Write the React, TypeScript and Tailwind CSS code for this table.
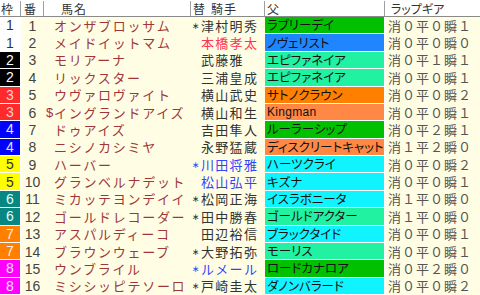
import React from "react";

type Row = {
  w: number;
  n: number;
  pre?: string;
  name: string;
  jp?: string;
  j: string;
  jc: string;
  sire: string;
  sc: string;
  gear: string;
};

const GREEN = "#00c000";
const BLUE = "#1f86ff";
const MINT = "#20f2a2";
const ORANGE = "#ff8000";
const CORAL = "#ff8844";
const CYAN = "#10f4ff";

const rows: Row[] = [
  { w: 1, n: 1, name: "オンザブロッサム", jp: "*", j: "津村明秀", jc: "#333333", sire: "ラブリーデイ", sc: GREEN, gear: "消０平０瞬１" },
  { w: 1, n: 2, name: "メイドイットマム", j: "本橋孝太", jc: "#ff3355", sire: "ノヴェリスト", sc: BLUE, gear: "消０平０瞬０" },
  { w: 2, n: 3, name: "モリアーナ", j: "武藤雅", jc: "#333333", sire: "エピファネイア", sc: MINT, gear: "消０平１瞬１" },
  { w: 2, n: 4, name: "リックスター", j: "三浦皇成", jc: "#333333", sire: "エピファネイア", sc: MINT, gear: "消０平０瞬１" },
  { w: 3, n: 5, name: "ウヴァロヴァイト", j: "横山武史", jc: "#333333", sire: "サトノクラウン", sc: ORANGE, gear: "消０平０瞬２" },
  { w: 3, n: 6, pre: "$", name: "イングランドアイズ", j: "横山和生", jc: "#333333", sire: "Kingman", sc: CORAL, gear: "消０平０瞬１" },
  { w: 4, n: 7, name: "ドゥアイズ", j: "吉田隼人", jc: "#333333", sire: "ルーラーシップ", sc: GREEN, gear: "消０平２瞬１" },
  { w: 4, n: 8, name: "ニシノカシミヤ", j: "永野猛蔵", jc: "#333333", sire: "ディスクリートキャット", sc: CORAL, gear: "消１平２瞬０" },
  { w: 5, n: 9, name: "ハーバー", jp: "*", j: "川田将雅", jc: "#3344ff", sire: "ハーツクライ", sc: CYAN, gear: "消０平０瞬２" },
  { w: 5, n: 10, name: "グランベルナデット", j: "松山弘平", jc: "#3344ff", sire: "キズナ", sc: CYAN, gear: "消０平０瞬１" },
  { w: 6, n: 11, name: "ミカッテヨンデイイ", jp: "*", j: "松岡正海", jc: "#333333", sire: "イスラボニータ", sc: CYAN, gear: "消１平０瞬０" },
  { w: 6, n: 12, name: "ゴールドレコーダー", jp: "*", j: "田中勝春", jc: "#333333", sire: "ゴールドアクター", sc: MINT, gear: "消１平０瞬０" },
  { w: 7, n: 13, name: "アスパルディーコ", j: "田辺裕信", jc: "#333333", sire: "ブラックタイド", sc: CYAN, gear: "消０平０瞬１" },
  { w: 7, n: 14, name: "ブラウンウェーブ", jp: "*", j: "大野拓弥", jc: "#333333", sire: "モーリス", sc: MINT, gear: "消０平０瞬１" },
  { w: 8, n: 15, name: "ウンブライル", jp: "*", j: "ルメール", jc: "#3344ff", sire: "ロードカナロア", sc: GREEN, gear: "消０平２瞬０" },
  { w: 8, n: 16, name: "ミシシッピテソーロ", jp: "*", j: "戸崎圭太", jc: "#333333", sire: "ダノンバラード", sc: CYAN, gear: "消０平０瞬２" },
];

const wakuStyle: Record<number, { bg: string; fg: string }> = {
  1: { bg: "#ffffff", fg: "#333333" },
  2: { bg: "#000000", fg: "#ffffff" },
  3: { bg: "#ff2a2a", fg: "#ffd0d0" },
  4: { bg: "#0000ff", fg: "#e0e0ff" },
  5: { bg: "#ffff00", fg: "#333333" },
  6: { bg: "#078682", fg: "#e0ffff" },
  7: { bg: "#ff8000", fg: "#fff0e0" },
  8: { bg: "#ff00ff", fg: "#ffe0ff" },
};

function HeadSep() {
  return <div className="w-[2px] h-[15px] self-start mt-[-0.5px] border-l border-[#a0a0a0] border-r border-r-white" />;
}

export default function App() {
  return (
    <div
      className="w-[480px] h-[295px] overflow-hidden bg-[#fffee4] text-[13px] leading-[16px]"
      style={{ fontFamily: '"Noto Sans CJK JP", "Noto Sans", sans-serif' }}
    >
      {/* header */}
      <div className="flex h-[17px] bg-white border-b border-[#8a8a8a] text-[#333] text-[12px] leading-[14px] items-center pt-[1.5px]">
        <div className="w-[20px] pl-[1px]">枠</div>
        <HeadSep />
        <div className="w-[21px] pl-[2px]">番</div>
        <HeadSep />
        <div className="w-[145px] pl-[16px] tracking-[1px]">馬名</div>
        <HeadSep />
        <div className="w-[72px] pl-[1px]">替<span className="ml-[6px] tracking-[1px]">騎手</span></div>
        <HeadSep />
        <div className="w-[118px] pl-[1px]">父</div>
        <HeadSep />
        <div className="flex-1 pl-[5px] [font-feature-settings:'palt']">ラップギア</div>
      </div>
      {/* rows */}
      {rows.map((r) => {
        const ws = wakuStyle[r.w];
        return (
          <div key={r.n} className="flex h-[17.375px]">
            <div
              className="w-[21px] h-full flex items-center justify-center border-b border-r border-white text-[14px]"
              style={{ backgroundColor: ws.bg, color: ws.fg, fontFamily: '"Liberation Sans", sans-serif' }}
            >
              {r.w}
            </div>
            <div
              className="w-[23px] h-full flex items-center justify-center text-[#444] text-[14px]"
              style={{ fontFamily: '"Liberation Sans", sans-serif' }}
            >
              {r.n}
            </div>
            <div className="w-[147px] h-full flex items-center pl-[10px] text-[#a0363a] tracking-[1.7px] whitespace-nowrap">
              {r.pre && (
                <span className="ml-[-8px] w-[8px] tracking-normal" style={{ fontFamily: '"Liberation Sans", sans-serif' }}>
                  {r.pre}
                </span>
              )}
              {r.name}
            </div>
            <div
              className="w-[74px] h-full flex items-center pl-[10px] tracking-[1.3px] whitespace-nowrap"
              style={{ color: r.jc }}
            >
              {r.jp && (
                <span className="ml-[-9px] w-[9px] text-[9px] tracking-normal" style={{ fontFamily: '"DejaVu Sans", sans-serif' }}>
                  ∗
                </span>
              )}
              {r.j}
            </div>
            <div
              className="w-[120px] h-full flex items-center pl-[2px] border-b border-r border-white text-[12.5px] text-[#111] whitespace-nowrap [font-feature-settings:'palt']"
              style={{ backgroundColor: r.sc }}
            >
              {r.sire === "Kingman" ? (
                <span style={{ fontFamily: '"Liberation Sans", sans-serif' }} className="tracking-[0.3px] text-[12px]">Kingman</span>
              ) : (
                r.sire
              )}
            </div>
            <div className="flex-1 h-full flex items-center pl-[3px] text-[#555] tracking-[1px] whitespace-nowrap">
              {r.gear}
            </div>
          </div>
        );
      })}
    </div>
  );
}
